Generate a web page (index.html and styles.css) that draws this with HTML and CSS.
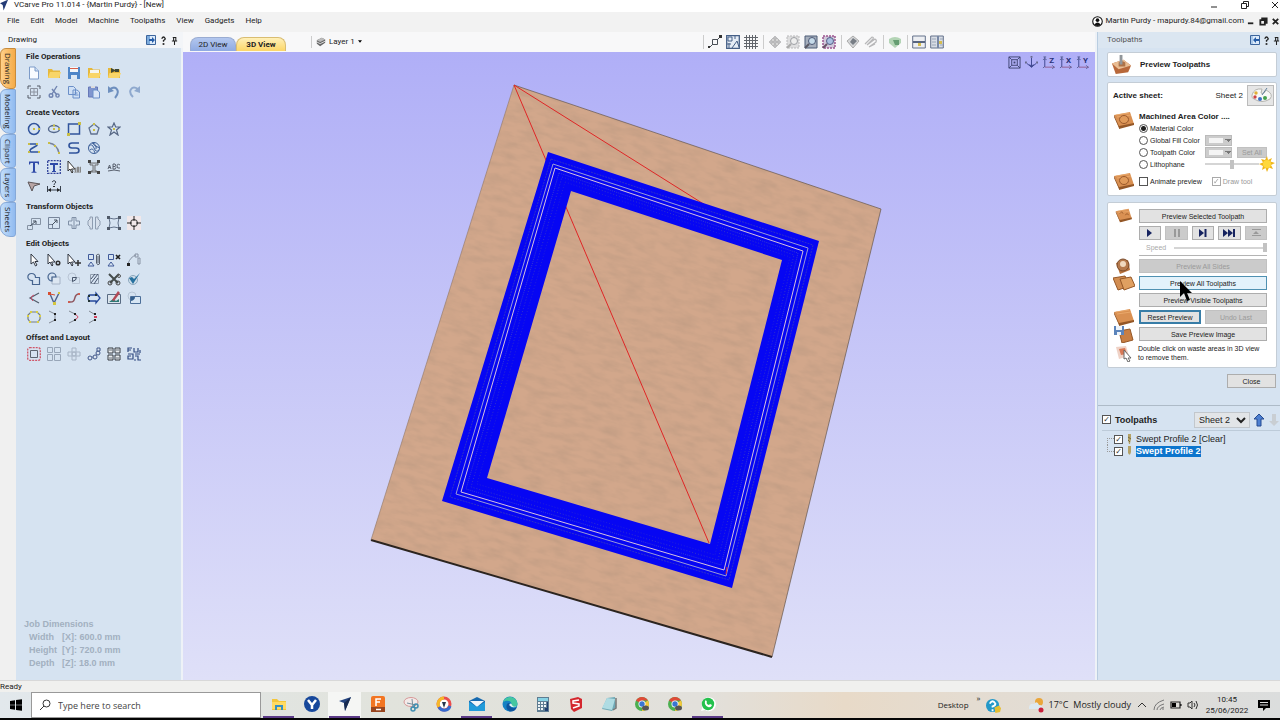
FILE: index.html
```html
<!DOCTYPE html>
<html lang="en">
<head>
<meta charset="utf-8">
<title>VCarve Pro</title>
<link rel="stylesheet" href="styles.css">
</head>
<body>
<svg class="sprite" aria-hidden="true">
  <symbol id="new" viewBox="0 0 14 14"><path d="M2.500 1H8l3.500 3.500V13h-9z" fill="#f8fbff" stroke="#7d9bc8"/><path d="M8 1v4h4" fill="#cfe0f5" stroke="#7d9bc8"/></symbol>
  <symbol id="open" viewBox="0 0 14 14"><path d="M1 12V3h4l1 1.500h7V12z" fill="#e6b83c"/><path d="M1 12l2-6h11l-2 6z" fill="#f8d568"/></symbol>
  <symbol id="save" viewBox="0 0 14 14"><path d="M1 1h12v12H1z" fill="#4f86c8"/><path d="M3 1h8v5H3z" fill="#f4f7fa"/><path d="M3 2h8v1H3z" fill="#d8604a"/><path d="M4 9h6v4H4z" fill="#dfe9f4"/></symbol>
  <symbol id="openvec" viewBox="0 0 14 14"><path d="M1 12V2h4l1 1.500h7V12z" fill="#e6b83c"/><path d="M3 4h9v4H3z" fill="#f6f6ef"/><path d="M1 12l1.500-5H14l-2 5z" fill="#f8d568"/></symbol>
  <symbol id="import" viewBox="0 0 14 14"><path d="M1 12V2h4l1 1.500h7V12z" fill="#e6b83c"/><path d="M1 12l1.500-5H14l-2 5z" fill="#f8d568"/><path d="M4 2l5 2.500L4 7zM8 3h4v3H8z" fill="#3e4634"/></symbol>
  <symbol id="jobsize" viewBox="0 0 14 14"><g fill="none" stroke="#555b66"><path d="M1 4V1h3M10 1h3v3M13 10v3h-3M4 13H1v-3"/><path d="M3.500 3.500h7v7h-7zM7 3v8M3 7h8" stroke="#8c93a0"/></g></symbol>
  <symbol id="cut" viewBox="0 0 14 14"><g fill="none" stroke="#6f83b0" stroke-width="1.400"><path d="M10 1L5 9M5 4l5 6"/><circle cx="4" cy="10.500" r="1.800"/><circle cx="10.500" cy="10.500" r="1.600"/></g></symbol>
  <symbol id="copy" viewBox="0 0 14 14"><path d="M1.500 1.500h5l2 2v6h-7zM6 5h4l2.500 2v6H6z" fill="#cfe0f5" stroke="#6b8fc8"/><path d="M7.500 8h3M7.500 10h4" stroke="#6b8fc8"/></symbol>
  <symbol id="paste" viewBox="0 0 14 14"><path d="M1.500 2h9v10h-9z" fill="#8096cf" stroke="#6778b8"/><path d="M4 1h4v2H4z" fill="#ddd"/><path d="M6 5h4l2.500 2v6H6z" fill="#dae6f7" stroke="#6b8fc8"/></symbol>
  <symbol id="undo" viewBox="0 0 14 14"><path d="M3 4c6-4 11 2 5 9" fill="none" stroke="#6e8fbe" stroke-width="2"/><path d="M1 1v7l6-2z" fill="#6e8fbe"/></symbol>
  <symbol id="redo" viewBox="0 0 14 14"><path d="M11 4C5 0 0 6 6 12" fill="none" stroke="#8fa9ce" stroke-width="2"/><path d="M13 1v7L7 6z" fill="#8fa9ce"/></symbol>
  <symbol id="circle" viewBox="0 0 14 14"><circle cx="7" cy="7" r="5.500" fill="none" stroke="#31549c" stroke-width="1.500"/><path d="M6 6h2v2H6zM11 6h2v2h-2z" fill="#c8bd45"/></symbol>
  <symbol id="ellipse" viewBox="0 0 14 14"><ellipse cx="7" cy="7" rx="5.500" ry="3.500" fill="none" stroke="#53678c" stroke-width="1.400"/><path d="M6 6h2v2H6zM6 2.500h2v2H6zM11 6h2v2h-2z" fill="#c8bd45"/></symbol>
  <symbol id="rect" viewBox="0 0 14 14"><path d="M1.500 2h11v10h-11z" fill="none" stroke="#31549c" stroke-width="1.500"/><path d="M0 11h3v3H0zM11 0h3v3h-3z" fill="#c8bd45"/></symbol>
  <symbol id="poly" viewBox="0 0 14 14"><path d="M7 2l5 4-2 6H4L2 6z" fill="none" stroke="#607190" stroke-width="1.300"/><path d="M6 7h2v2H6zM6 1h2v2H6z" fill="#c8bd45"/></symbol>
  <symbol id="star" viewBox="0 0 14 14"><path d="M7 1l1.700 4H13L9.500 8l1.500 5-4-3-4 3 1.500-5L1 5h4.300z" fill="none" stroke="#566784" stroke-width="1.200"/><path d="M6 6h2v2H6z" fill="#c8bd45"/></symbol>
  <symbol id="polyline" viewBox="0 0 14 14"><path d="M2 3l7 0q2 1 0 2L4 8q-2 2 0 3h8" fill="none" stroke="#31549c" stroke-width="1.600"/><path d="M1 2h2v2H1zM9 2h2v2H9zM1 10h2v2H1zM11 10h2v2h-2z" fill="#c8bd45"/></symbol>
  <symbol id="arc" viewBox="0 0 14 14"><path d="M2 2q8 1 10 10" fill="none" stroke="#78839a" stroke-width="1.400"/><path d="M1 1h2v2H1zM7 4h2v2H7zM11 11h2v2h-2z" fill="#c8bd45"/></symbol>
  <symbol id="curve" viewBox="0 0 14 14"><path d="M12 2H5Q2 2 2 4.500T5 7h4q3 0 3 2.500T9 12H2" fill="none" stroke="#31549c" stroke-width="1.600"/></symbol>
  <symbol id="texture" viewBox="0 0 14 14"><g fill="none" stroke="#3c5f98"><circle cx="7" cy="7" r="5.500"/><path d="M2 5q3-3 5 2t5 2M3 9q3-3 5 3M5 2q5 1 4 6M7 1.500q-2 3 5 5"/></g></symbol>
  <symbol id="text" viewBox="0 0 14 14"><path d="M2 1.500h10v3h-1L10.500 3H8v8.500l1.500.5v.8h-5V12l1.500-.5V3H3.500L3 4.500H2z" fill="#2f4aa8"/></symbol>
  <symbol id="textbox" viewBox="0 0 14 14"><path d="M.7.700h12.600v12.600H.7z" fill="none" stroke="#33449a" stroke-width="1.300" stroke-dasharray="2 1"/><path d="M3 3h8v2H8v6h1v1H5v-1h1V5H3z" fill="#2f4aa8"/></symbol>
  <symbol id="textsel" viewBox="0 0 14 14"><path d="M1 1v10l2-2 2 4 1-1-1.500-3H8z" fill="#fff" stroke="#333"/><path d="M8 8h1v4H8zM10 7h2v5h-2zM13 7h1v5h-1zM7 12.500h7" fill="#888" stroke="#888" stroke-width=".5"/></symbol>
  <symbol id="textcurve" viewBox="0 0 14 14"><path d="M3 3h8v2H8v6h2v1H4v-1h2V5H3z" fill="#c9d3de" stroke="#555" stroke-width=".8"/><path d="M1 0h3v3H1zM10 0h3v3h-3zM1 11h3v3H1zM10 11h3v3h-3z" fill="#444"/></symbol>
  <symbol id="textarc" viewBox="0 0 14 14"><path d="M1 9l1.500-4L4 9M1.500 7.500h2M6 9V4h2q1.500 1 0 2.500H6M8 6.500q2 1 0 2.500H6M13 5q-3-2-3 1t3 2M1 11q6-2 12 0" fill="none" stroke="#59616f"/></symbol>
  <symbol id="trace" viewBox="0 0 14 14"><path d="M1 3l12 2-6 2-2 5z" fill="#b9a6a6" stroke="#5c5558"/></symbol>
  <symbol id="dim" viewBox="0 0 14 14"><path d="M.5 7v6M13.500 7v6M1 11h12M5 3q2-3 4 0-2 2-2 3" fill="none" stroke="#38404d"/><path d="M1 11l3-2v4zM13 11l-3-2v4zM6 7h2v1H6z" fill="#222"/></symbol>
  <symbol id="move" viewBox="0 0 14 14"><path d="M4.500 2.500h9v6h-9zM.5 9.500h5v4h-5z" fill="none" stroke="#8592a3"/><path d="M3 10l6-5M9 5H6M9 5v3" stroke="#46515f"/></symbol>
  <symbol id="size" viewBox="0 0 14 14"><path d="M1.500 1.500h11v11h-11zM1.500 8.500h4v4" fill="none" stroke="#77859a"/><path d="M5 9l5-5M7 4h3v3" fill="none" stroke="#46515f"/></symbol>
  <symbol id="mirror" viewBox="0 0 14 14"><path d="M5 1.500h4V5h3.500v4H9v3.500H5V9H1.500V5H5zM7 1v12" fill="none" stroke="#8090a7"/></symbol>
  <symbol id="align" viewBox="0 0 14 14"><path d="M5.500 1H3v2L1 5v4l2 2v2h2.500zM8.500 1H11v2l2 2v4l-2 2v2H8.500z" fill="#d6dfeb" stroke="#8e9cb0"/></symbol>
  <symbol id="distort" viewBox="0 0 14 14"><path d="M2 2q5 2 10 0-2 5 0 10-5-2-10 0 2-5 0-10z" fill="none" stroke="#64738b"/><path d="M0 0h3v3H0zM11 0h3v3h-3zM0 11h3v3H0zM11 11h3v3h-3z" fill="#4f5968"/></symbol>
  <symbol id="center" viewBox="0 0 14 14"><path d="M0 0h14v14H0z" fill="#f1e8ea"/><circle cx="7" cy="7" r="3.500" fill="none" stroke="#333"/><path d="M7 0v5M7 9v5M0 7h5M9 7h5" stroke="#222"/></symbol>
  <symbol id="cursor" viewBox="0 0 14 14"><path d="M4 1v10l2.500-2 2 4 1.500-1-2-3.500h3z" fill="#fff" stroke="#303641"/></symbol>
  <symbol id="cursornode" viewBox="0 0 14 14"><path d="M1 1v10l2-2 2 4 1-1-1.500-3H8z" fill="#fff" stroke="#303641"/><circle cx="11" cy="10" r="1.800" fill="none" stroke="#333" stroke-width="1.500"/></symbol>
  <symbol id="cursormove" viewBox="0 0 14 14"><path d="M1 1v10l2-2 2 4 1-1-1.500-3H8z" fill="#fff" stroke="#303641"/><path d="M11 7v6M8 10h6" stroke="#333" stroke-width="1.500"/></symbol>
  <symbol id="group" viewBox="0 0 14 14"><path d="M1.500 1.500h5v5h-5zM1 13l3-4 3 4z" fill="none" stroke="#405a99"/><path d="M9.500 2q3-2 3 1v8q-2 2-3-1zM11 3v7" fill="none" stroke="#59616e"/></symbol>
  <symbol id="ungroup" viewBox="0 0 14 14"><path d="M1.500 1.500h5v5h-5zM1 13l3-4 3 4z" fill="none" stroke="#405a99"/><path d="M9 2l4 4M13 2L9 6" stroke="#222" stroke-width="1.700"/></symbol>
  <symbol id="measure" viewBox="0 0 14 14"><path d="M1 11q2-7 8-9M8 1h3v3H8zM11 5h2v6h-2z" fill="none" stroke="#8893a4"/><path d="M0 10h3v3H0z" fill="#222"/></symbol>
  <symbol id="weld" viewBox="0 0 14 14"><path d="M8.500 5.500h4v7h-7v-4C-.5 9-.5 1.500 4.500 1.500q4 0 4 4z" fill="none" stroke="#47658f" stroke-width="1.200"/></symbol>
  <symbol id="subtract" viewBox="0 0 14 14"><path d="M5 5h8v7H5z" fill="#dce6f1" stroke="#a6b4c7"/><path d="M5 9A4 4 0 1 1 9 5H5z" fill="none" stroke="#47658f" stroke-width="1.200"/></symbol>
  <symbol id="intersect" viewBox="0 0 14 14"><circle cx="5" cy="5" r="4" fill="none" stroke="#b9c5d5"/><path d="M5.500 5.500h7v6h-7z" fill="none" stroke="#b9c5d5"/><path d="M5.500 5.500h4q0 3-4 4z" fill="none" stroke="#47556b"/></symbol>
  <symbol id="hatch" viewBox="0 0 14 14"><path d="M3.500 2.500h8v9h-8z" fill="none" stroke="#909dad"/><path d="M4 7l4-5M4 11l7-9M7 12l4-6" stroke="#45526b"/></symbol>
  <symbol id="scissors" viewBox="0 0 14 14"><path d="M2 2l9 9M12 2L3 11" stroke="#444c4c" stroke-width="2"/><circle cx="11" cy="11" r="2" fill="none" stroke="#444"/><circle cx="3" cy="11" r="2" fill="none" stroke="#444"/><circle cx="12" cy="4" r="1.500" fill="none" stroke="#555"/></symbol>
  <symbol id="check" viewBox="0 0 14 14"><circle cx="6" cy="8" r="4.500" fill="#cfdeea" stroke="#8ba7bd"/><path d="M2 6l4 6 7-11-6 6-2-2z" fill="#27719f"/></symbol>
  <symbol id="fillet" viewBox="0 0 14 14"><path d="M12 2L3 7l9 5" fill="none" stroke="#525d6b" stroke-width="1.200"/><path d="M7 4Q2 6 6 10" fill="none" stroke="#cd4a67"/></symbol>
  <symbol id="nodes" viewBox="0 0 14 14"><path d="M3 3l4 9 5-10" fill="none" stroke="#4d628d" stroke-width="1.400"/><path d="M3 3l5 1" stroke="#d74e31"/><path d="M1 1h3v3H1z" fill="#d74e31"/><path d="M6 11h3v3H6zM11 1h2v2h-2z" fill="#d5c63e"/></symbol>
  <symbol id="scurve" viewBox="0 0 14 14"><path d="M2 11c9 1 3-8 10-8" fill="none" stroke="#8e565f" stroke-width="1.500"/><path d="M1 10h2v2H1zM11 2h2v2h-2z" fill="#cc5d51"/></symbol>
  <symbol id="extend" viewBox="0 0 14 14"><path d="M2 4h7V2l4 5-4 5v-2H2q-2-3 0-6z" fill="none" stroke="#25489a" stroke-width="1.300"/><path d="M1 4h2v2H1zM1 9h2v2H1zM8 3h2v2H8z" fill="#233"/></symbol>
  <symbol id="editpic" viewBox="0 0 14 14"><path d="M.5 3.500h13v9H.5z" fill="#dce4ed" stroke="#596b83"/><path d="M2 11l4-3 3 2 3-2v3z" fill="#2f7a75"/><path d="M5 9l6-9 2 2-6 8z" fill="#b24956"/></symbol>
  <symbol id="croppic" viewBox="0 0 14 14"><circle cx="5" cy="5" r="4" fill="none" stroke="#b8c6d6"/><path d="M3.500 5.500h10v7h-10z" fill="#d7e6f4" stroke="#4c6f99"/><path d="M4 6h4q0 3-4 4z" fill="#345f8d"/></symbol>
  <symbol id="close" viewBox="0 0 14 14"><path d="M4 2h6l3 3v4l-2 3H3L1 9V5z" fill="none" stroke="#747e82" stroke-width="1.200"/><path d="M3 1h2v2H3zM9 1h2v2H9zM0 5h2v2H0zM12 5h2v2h-2zM2 11h2v2H2zM10 11h2v2h-2z" fill="#dacf43"/></symbol>
  <symbol id="join" viewBox="0 0 14 14"><path d="M2 1l6 3v6l-6 3" fill="none" stroke="#828a95"/><path d="M7 3h2v2H7zM7 9h2v2H7z" fill="#222"/></symbol>
  <symbol id="joincurve" viewBox="0 0 14 14"><path d="M2 1l6 3M2 13l6-3" stroke="#828a95"/><path d="M7 4q8 3 0 6" fill="none" stroke="#d44661"/><path d="M7 3h2v2H7zM7 9h2v2H7z" fill="#222"/></symbol>
  <symbol id="joinmove" viewBox="0 0 14 14"><path d="M2 1l5 3M2 13l5-3" stroke="#828a95"/><path d="M7 3h2v2H7zM7 9h2v2H7z" fill="#222"/><path d="M7 6h3v2H7z" fill="#d44661"/></symbol>
  <symbol id="offset" viewBox="0 0 14 14"><rect x=".7" y=".7" width="12.600" height="12.600" rx="2" fill="none" stroke="#cf5569" stroke-width="1.300" stroke-dasharray="2 1"/><path d="M3.500 3.500h7v7h-7z" fill="none" stroke="#5e6671"/></symbol>
  <symbol id="array" viewBox="0 0 14 14"><path d="M.5.500h5v5h-5zM7.500.500h6v5h-6zM.5 7.500h5v6h-5zM7.500 7.500h6v6h-6z" fill="none" stroke="#98a6b8"/></symbol>
  <symbol id="circular" viewBox="0 0 14 14"><circle cx="7" cy="7" r="2" fill="none" stroke="#a7b4c5"/><path d="M5 1h4v4H5zM5 9h4v4H5zM1 5h4v4H1zM9 5h4v4H9z" fill="none" stroke="#a7b4c5"/></symbol>
  <symbol id="alongcurve" viewBox="0 0 14 14"><path d="M1 11q8 0 12-9" fill="none" stroke="#7384aa"/><g fill="#dce5f1" stroke="#42588b"><circle cx="3" cy="11" r="2"/><circle cx="8" cy="10" r="2"/><circle cx="11" cy="6" r="2"/><path d="M10 1h3v3h-3z"/></g></symbol>
  <symbol id="plate" viewBox="0 0 14 14"><path d="M1 1h5v5H1zM8 1h5v5H8zM1 8h5v5H1zM8 8h5v5H8z" fill="#e9ecef" stroke="#353b43"/><path d="M2 3h3M9 3h3M2 11h3M9 11h3" stroke="#66707b"/></symbol>
  <symbol id="nest" viewBox="0 0 14 14"><path d="M1 5V1h4M1 3h3M7 1v4h4V1M1 7h5v5H1V9h3M8 7h5M8 9h3v4h3M7 13h2M13 3v3" fill="none" stroke="#314b82" stroke-width="1.200"/></symbol>
  <symbol id="snap" viewBox="0 0 14 14"><path d="M4.500 4.500h5v5h-5zM1 13l4-4M9 5l4-4" fill="none" stroke="#4b5057"/><path d="M0 11h2v2H0zM11 0h3v3h-3z" fill="#333"/></symbol>
  <symbol id="guides" viewBox="0 0 14 14"><path d="M.7.700h12.600v12.600H.7z" fill="#e6edf6" stroke="#466087" stroke-width="1.300"/><path d="M2 2h4v4H2zM3 8v5M1 9h4M6 13l5-7 2 6M9 1v3" fill="none" stroke="#466087"/></symbol>
  <symbol id="grid" viewBox="0 0 14 14"><path d="M2.500 0v14M5.500 0v14M8.500 0v14M11.500 0v14M0 2.500h14M0 5.500h14M0 8.500h14M0 11.500h14" stroke="#62666c"/></symbol>
  <symbol id="pan" viewBox="0 0 14 14"><path d="M7 1l3 3H8v2h2V4l3 3-3 3V8H8v2h2l-3 3-3-3h2V8H4v2L1 7l3-3v2h2V4H4z" fill="#bdbdbf" stroke="#a5a5a7" stroke-width=".5"/></symbol>
  <symbol id="zoomg" viewBox="0 0 14 14"><path d="M1 1h12v12H1z" fill="#dededf" stroke="#b9b9bb" stroke-dasharray="2 1"/><circle cx="8" cy="6" r="3.500" fill="#eee" stroke="#9d9fa4"/><path d="M5 9l-4 4" stroke="#aaa" stroke-width="2"/></symbol>
  <symbol id="zoomb" viewBox="0 0 14 14"><path d="M1 1h12v12H1z" fill="#a6afbd" stroke="#4c5c76"/><circle cx="8" cy="6" r="3.500" fill="#c6dbea" stroke="#4d5875"/><path d="M5 9l-4 4" stroke="#5a5864" stroke-width="2"/></symbol>
  <symbol id="zoomp" viewBox="0 0 14 14"><path d="M1 1h12v12H1z" fill="#d2c8da" stroke="#9c5590" stroke-width="1.500" stroke-dasharray="2 1"/><circle cx="8" cy="6" r="3.500" fill="#a9bfe0" stroke="#545e86"/><path d="M5 9l-4 4" stroke="#675367" stroke-width="2"/></symbol>
  <symbol id="iso" viewBox="0 0 14 14"><path d="M1 6l6-5 6 5-6 7z" fill="#d5d6d8" stroke="#aaa"/><path d="M7 3l4 3-4 4-3-3z" fill="#777d85"/></symbol>
  <symbol id="lines" viewBox="0 0 14 14"><path d="M1 9l7-7q2 0 1 2L3 10l8-6q2 1 1 3l-7 5 6-3" fill="none" stroke="#b7b7b9" stroke-width="1.200"/></symbol>
  <symbol id="material" viewBox="0 0 14 14"><path d="M1 4q6-4 12 0v4l-6 5-6-5z" fill="#b3d4b5"/><path d="M5 5h6v5H7z" fill="#659d72"/></symbol>
  <symbol id="splith" viewBox="0 0 14 14"><path d="M.7 1h12.600v12H.7z" fill="#eceef2" stroke="#65728b"/><path d="M1 6h12v2H1z" fill="#586580"/><path d="M6 8h3v3H6z" fill="#d6bd4e"/></symbol>
  <symbol id="splitv" viewBox="0 0 14 14"><path d="M.7 1h12.600v12H.7z" fill="#d8dde5" stroke="#65728b"/><path d="M7 1h2v12H7z" fill="#7888a5"/><path d="M2 4h4M2 7h4M2 10h4M10 4h3M10 10h3" stroke="#9aa5b7"/><path d="M9 6h3v3H9z" fill="#d6bd4e"/></symbol>
  <symbol id="home" viewBox="0 0 14 14"><path d="M1 1h12v12H1zM4 4h6v6H4zM1 1l3 3M13 1l-3 3M1 13l3-3M13 13l-3-3" fill="none" stroke="#3e4370"/><path d="M6 6h2v2H6z" fill="#3e4370"/></symbol>
  <symbol id="axis" viewBox="0 0 14 14"><path d="M7 2v10M7 12L2 8M7 12l5-4M5 9l2 3 2-3" fill="none" stroke="#39428a"/><path d="M0 6h2v2H0zM12 6h2v2h-2zM6 0h2v2H6z" fill="#67698d"/></symbol>
  <symbol id="axisl" viewBox="0 0 14 14"><path d="M3 1v11" stroke="#39428a"/><path d="M3 12h11" stroke="#925c8e"/><path d="M1.500 1h3M1 13l2-2M1 4l2-1 2 1M11 10l2 2-2 2" fill="none" stroke="#5a6195"/></symbol>
  <symbol id="wood" viewBox="0 0 22 18"><path d="M1 4l16-3 4 12-15 4z" fill="#d99052"/><path d="M1 4l5 11v2L1 6zM6 15l15-3v2L6 18z" fill="#945727"/><path d="M3 4l13-2M4 6l14-2" stroke="#efb174" stroke-width=".7"/></symbol>
  <symbol id="ring" viewBox="0 0 22 18"><use href="#wood"/><ellipse cx="11" cy="8.500" rx="4.500" ry="4" fill="#e09a5a" stroke="#9a592b"/></symbol>
  <symbol id="woodx" viewBox="0 0 22 18"><g transform="translate(2 1) scale(.8)"><use href="#wood" width="22" height="18"/><path d="M6 7q3-4 4 0M13 9q2-4 4 0" fill="none" stroke="#995827"/></g></symbol>
  <symbol id="sides" viewBox="0 0 22 18"><path d="M3 6l12-3 2 10-10 4z" fill="#b8723c"/><circle cx="10" cy="8" r="6" fill="#b5794c" stroke="#7a4c2c"/><circle cx="10" cy="7" r="3" fill="#f1d9bf"/></symbol>
  <symbol id="stack" viewBox="0 0 22 18"><path d="M0 4l12-2 5 10-12 4z" fill="#d28d51" stroke="#945727"/><path d="M7 5l11-2 4 9-11 4z" fill="#dfa061" stroke="#945727"/></symbol>
  <symbol id="saveimg" viewBox="0 0 22 18"><path d="M6 6l11-2 3 11-11 3z" fill="#c87e43" stroke="#945727"/><path d="M1 1h10v9H1z" fill="#5b84bb"/><path d="M3 1h6v4H3zM4 7h4v3H4z" fill="#eef4fa"/></symbol>
  <symbol id="waste" viewBox="0 0 22 18"><path d="M3 3l10-1 3 10-10 3z" fill="#e8bfae" opacity=".7"/><path d="M6 5l6-1 2 6-6 1z" fill="#d77855"/><path d="M11 6v9l2-1 2 4 2-1-2-3h3z" fill="#fff" stroke="#666"/></symbol>
  <symbol id="tool" viewBox="0 0 22 22"><path d="M1 10l12-4 8 6-3 7-13 2z" fill="#b8683a"/><path d="M1 10l12-4 8 6-13 4z" fill="#e9bd93"/><path d="M8 9q3-3 7 0v4H8z" fill="#ad7247"/><path d="M9 1h3v10H9z" fill="#91969a"/></symbol>
  <symbol id="help" viewBox="0 0 8 10"><path d="M2 3Q4-1 6 3 6 4 4 5v1.500" fill="none" stroke="#222" stroke-width="1.500"/><path d="M3 8h2v2H3z" fill="#222"/></symbol>
  <symbol id="pin" viewBox="0 0 8 10"><path d="M2 1.500h4M3 1v4M5.500 1v4M1 5.500h6M4 6v4" stroke="#222" stroke-width="1.200"/></symbol>
  <symbol id="dock" viewBox="0 0 10 10"><path d="M.5.500h9v9h-9z" fill="#dceafa" stroke="#3c659d"/><path d="M1 1h3v8H1z" fill="#7dabdc"/><path d="M3 4h3V2l3 3-3 3V6H3z" fill="#245ca8"/></symbol>
  <symbol id="dockl" viewBox="0 0 10 10"><path d="M.5.500h9v9h-9z" fill="#dceafa" stroke="#3c659d"/><path d="M2 1v8" stroke="#7dabdc"/><path d="M9 4H6V2L3 5l3 3V6h3z" fill="#245ca8"/></symbol>
  <symbol id="min" viewBox="0 0 10 10"><path d="M1 7h6" stroke="currentColor"/></symbol>
  <symbol id="restore" viewBox="0 0 10 10"><path d="M1.500 3.500h5v5h-5zM3.500 3V1.500h5v5H7" fill="none" stroke="currentColor"/></symbol>
  <symbol id="xclose" viewBox="0 0 10 10"><path d="M2 2l6 6M8 2L2 8" stroke="currentColor"/></symbol>
  <symbol id="chrome" viewBox="0 0 16 16"><circle cx="8" cy="8" r="7" fill="#4caf50"/><path d="M8 8L2 4.500A7 7 0 0 1 14 4.500H8z" fill="#df4a38"/><path d="M8 8l6-3.500A7 7 0 0 1 8 15z" fill="#f6c83a"/><circle cx="8" cy="8" r="3.500" fill="#fff"/><circle cx="8" cy="8" r="2.700" fill="#3976d1"/><ellipse cx="11.500" cy="12" rx="3.500" ry="2.500" fill="#555"/></symbol>
</svg>

<div class="app">
  <header class="titlebar">
    <svg class="logo" viewBox="0 0 10 12"><path d="M0 4l9-4-5 12-1-6z" fill="#243c76"/></svg>
    <span>VCarve Pro 11.014 - {Martin Purdy} - [New]</span>
    <div class="winbtns">
      <button aria-label="Minimise"><svg><use href="#min"/></svg></button>
      <button aria-label="Restore"><svg><use href="#restore"/></svg></button>
      <button aria-label="Close window"><svg><use href="#xclose"/></svg></button>
    </div>
  </header>
  <nav class="menubar">
    <button>File</button><button>Edit</button><button>Model</button><button>Machine</button><button>Toolpaths</button><button>View</button><button>Gadgets</button><button>Help</button>
    <div class="account">
      <svg class="user" viewBox="0 0 12 12"><circle cx="6" cy="6" r="5.200" fill="#fff" stroke="#111" stroke-width="1.200"/><circle cx="6" cy="4.500" r="2" fill="#111"/><path d="M2.500 9.500q3.500-5 7 0-3.500 3-7 0z" fill="#111"/></svg>
      <span>Martin Purdy - mapurdy.84@gmail.com</span>
      <svg class="mdi"><use href="#min"/></svg><svg class="mdi"><use href="#restore"/></svg><svg class="mdi"><use href="#xclose"/></svg>
    </div>
  </nav>

  <main class="workspace">
    <aside class="left">
      <div class="panelhead"><span>Drawing</span><svg class="dock"><use href="#dock"/></svg><svg class="mini"><use href="#help"/></svg><svg class="mini"><use href="#pin"/></svg></div>
      <div class="leftbody">
        <div class="rail"><button class="on">Drawing</button><button>Modeling</button><button>Clipart</button><button>Layers</button><button>Sheets</button></div>
        <div class="tools">
          <section><h2>File Operations</h2><div class="icons">
            <svg><use href="#new"/></svg><svg><use href="#open"/></svg><svg><use href="#save"/></svg><svg><use href="#openvec"/></svg><svg><use href="#import"/></svg><i></i>
            <svg><use href="#jobsize"/></svg><svg><use href="#cut"/></svg><svg><use href="#copy"/></svg><svg><use href="#paste"/></svg><svg><use href="#undo"/></svg><svg><use href="#redo"/></svg></div></section>
          <section><h2>Create Vectors</h2><div class="icons">
            <svg><use href="#circle"/></svg><svg><use href="#ellipse"/></svg><svg><use href="#rect"/></svg><svg><use href="#poly"/></svg><svg><use href="#star"/></svg><i></i>
            <svg><use href="#polyline"/></svg><svg><use href="#arc"/></svg><svg><use href="#curve"/></svg><svg><use href="#texture"/></svg><i></i><i></i>
            <svg><use href="#text"/></svg><svg><use href="#textbox"/></svg><svg><use href="#textsel"/></svg><svg><use href="#textcurve"/></svg><svg><use href="#textarc"/></svg><i></i>
            <svg><use href="#trace"/></svg><svg><use href="#dim"/></svg></div></section>
          <section><h2>Transform Objects</h2><div class="icons">
            <svg><use href="#move"/></svg><svg><use href="#size"/></svg><svg><use href="#mirror"/></svg><svg><use href="#align"/></svg><svg><use href="#distort"/></svg><svg><use href="#center"/></svg></div></section>
          <section><h2>Edit Objects</h2><div class="icons">
            <svg><use href="#cursor"/></svg><svg><use href="#cursornode"/></svg><svg><use href="#cursormove"/></svg><svg><use href="#group"/></svg><svg><use href="#ungroup"/></svg><svg><use href="#measure"/></svg>
            <svg><use href="#weld"/></svg><svg><use href="#subtract"/></svg><svg><use href="#intersect"/></svg><svg><use href="#hatch"/></svg><svg><use href="#scissors"/></svg><svg><use href="#check"/></svg>
            <svg><use href="#fillet"/></svg><svg><use href="#nodes"/></svg><svg><use href="#scurve"/></svg><svg><use href="#extend"/></svg><svg><use href="#editpic"/></svg><svg><use href="#croppic"/></svg>
            <svg><use href="#close"/></svg><svg><use href="#join"/></svg><svg><use href="#joincurve"/></svg><svg><use href="#joinmove"/></svg></div></section>
          <section><h2>Offset and Layout</h2><div class="icons">
            <svg><use href="#offset"/></svg><svg><use href="#array"/></svg><svg><use href="#circular"/></svg><svg><use href="#alongcurve"/></svg><svg><use href="#plate"/></svg><svg><use href="#nest"/></svg></div></section>
          <dl class="job"><dt>Job Dimensions</dt><dd><span>Width</span><span>[X]: 600.0 mm</span></dd><dd><span>Height</span><span>[Y]: 720.0 mm</span></dd><dd><span>Depth</span><span>[Z]: 18.0 mm</span></dd></dl>
        </div>
      </div>
    </aside>

    <section class="middle">
      <div class="viewbar">
        <button class="tab">2D View</button><button class="tab current">3D View</button>
        <div class="layer"><svg class="layericon" viewBox="0 0 12 12"><path d="M1 4l6-3 4 2v4L5 11 1 8z" fill="#666"/><path d="M1 4l6-3 4 2-6 3z" fill="#bbb"/><path d="M1 6l4 2 6-3" fill="none" stroke="#eee"/></svg><button>Layer 1</button><svg class="caret" viewBox="0 0 5 3"><path d="M0 0h5L2.500 3z"/></svg></div>
        <div class="viewtools">
          <div><svg><use href="#snap"/></svg><svg><use href="#guides"/></svg><svg><use href="#grid"/></svg></div>
          <div><svg><use href="#pan"/></svg><svg><use href="#zoomg"/></svg><svg><use href="#zoomb"/></svg><svg><use href="#zoomp"/></svg></div>
          <div><svg><use href="#iso"/></svg><svg><use href="#lines"/></svg></div>
          <div><svg><use href="#material"/></svg></div>
          <div><svg><use href="#splith"/></svg><svg><use href="#splitv"/></svg></div>
        </div>
      </div>
      <div class="canvas">
        <svg class="scene" viewBox="183 52 912 628" preserveAspectRatio="xMidYMid meet">
          <defs>
            <filter id="grain" x="0" y="0" width="100%" height="100%"><feTurbulence type="fractalNoise" baseFrequency="0.05 0.16" numOctaves="4" seed="4"/><feColorMatrix values="0 0 0 0 .50  0 0 0 0 .32  0 0 0 0 .22  1.200 0 0 0 -.44"/></filter>
            <clipPath id="board"><path d="M514 85L881 209 772 657 371 540z"/></clipPath>
          </defs>
          <path d="M514 85L881 209 772 657 371 540z" fill="#d2a78b"/>
          <g clip-path="url(#board)"><rect x="200" y="0" width="850" height="800" filter="url(#grain)" transform="rotate(16 626 370)"/></g>
          <path d="M514 85L881 209 772 657" fill="none" stroke="#64564e" stroke-width=".7"/>
          <path d="M371 540l401 117" stroke="#2b241f" stroke-width="2"/>
          <path d="M514 85L371 540" stroke="#8f7768" stroke-width=".6"/>
          <path d="M514 85L709 543M514 85L710 208" stroke="#df2626"/>
          <path fill-rule="evenodd" fill="#0606f3" d="M548 152L819 241 732 588 442 501zM571 191L487 478 710 544 782 260z"/>
          <g fill="none">
            <path d="M551 159L813 245 729 580 450 497z" stroke="#2d30c9" stroke-dasharray="2 1"/>
            <path d="M553 164L808 248 726 576 456 494z" stroke="#9b9bd6"/>
            <path d="M555 168L803 251 724 570 461 492z" stroke="#d8c3db"/>
            <path d="M559 173L798 253 721 565 466 489z" stroke="#3336d5" stroke-dasharray="1 1"/>
            <path d="M562 177L794 255 718 560 471 487z" stroke="#3032cc" stroke-dasharray="1 2"/>
            <path d="M565 182L790 257 715 555 477 484z" stroke="#2021da" stroke-dasharray="1 2"/>
            <path d="M726 574l1-7" stroke="#d42b45"/>
          </g>
        </svg>
        <div class="axes"><svg><use href="#home"/></svg><svg><use href="#axis"/></svg><span><svg><use href="#axisl"/></svg><b>Z</b></span><span><svg><use href="#axisl"/></svg><b>X</b></span><span><svg><use href="#axisl"/></svg><b>Y</b></span></div>
      </div>
    </section>

    <aside class="right">
      <div class="panelhead"><span>Toolpaths</span><svg class="dock"><use href="#dockl"/></svg><svg class="mini"><use href="#help"/></svg><svg class="mini"><use href="#pin"/></svg></div>
      <div class="cards">
        <div class="card title"><svg class="toolicon"><use href="#tool"/></svg><h1>Preview Toolpaths</h1></div>
        <div class="card material">
          <div class="sheet"><b>Active sheet:</b><span>Sheet 2</span><button class="palette" aria-label="Colours"><svg viewBox="0 0 22 16"><path d="M2 8Q4 1 12 2l-1 4q3 2 5-3 8 4 4 9-8 5-16 0Q1 11 2 8z" fill="#f8f8f7" stroke="#b4b4af"/><circle cx="6" cy="6" r="1.700" fill="#dfaf37"/><circle cx="5" cy="10" r="1.700" fill="#cf4444"/><circle cx="10" cy="12" r="2" fill="#3b6fc4"/><circle cx="15" cy="11" r="2" fill="#46a14c"/><path d="M12 8l5-7" stroke="#5e7f9b"/></svg></button></div>
          <div class="area">
            <svg class="w"><use href="#ring"/></svg>
            <div class="opts"><b>Machined Area Color ....</b>
              <div class="opt"><label><input type="radio" name="area" checked>Material Color</label></div>
              <div class="opt"><label><input type="radio" name="area">Global Fill Color</label><button class="swatch" disabled aria-label="Fill colour"></button></div>
              <div class="opt"><label><input type="radio" name="area">Toolpath Color</label><button class="swatch" disabled aria-label="Toolpath colour"></button><button class="setall" disabled>Set All</button></div>
              <div class="opt"><label><input type="radio" name="area">Lithophane</label><input class="light" type="range" value="50" disabled aria-label="Light"><svg class="sun" viewBox="0 0 16 16"><path d="M8 0l1 4 4-2-1.500 3.500L16 7l-4 2 2 4-4-1.500L8 16l-1.500-4L3 14l1-4-4-2 4-1.500L2 3l4 1z" fill="#efb61b"/><circle cx="8" cy="8" r="4" fill="#ffd83b"/></svg></div>
            </div>
          </div>
          <div class="anim"><svg class="w"><use href="#ring"/></svg><label><input type="checkbox">Animate preview</label><label class="off"><input type="checkbox" checked disabled>Draw tool</label></div>
        </div>
        <div class="card actions">
          <svg class="w"><use href="#woodx"/></svg><button>Preview Selected Toolpath</button>
          <div class="transport"><button aria-label="Play"><svg viewBox="0 0 16 10"><path d="M5 1l5 4-5 4z"/></svg></button><button disabled aria-label="Pause"><svg viewBox="0 0 16 10"><path d="M5 1h2v8H5zM9 1h2v8H9z"/></svg></button><button aria-label="Step"><svg viewBox="0 0 16 10"><path d="M4 1l5 4-5 4zM9.500 1h2v8h-2z"/></svg></button><button aria-label="End"><svg viewBox="0 0 16 10"><path d="M2 1l5 4-5 4zM7 1l5 4-5 4zM12 1h2v8h-2z"/></svg></button><button disabled aria-label="Skip"><svg viewBox="0 0 16 10"><path d="M4 1h9v1H4zM8 3l3 3H5zM4 7h9v1H4z"/></svg></button></div>
          <div class="speed"><label for="speed">Speed</label><input id="speed" type="range" value="100" disabled></div>
          <svg class="w"><use href="#sides"/></svg><button disabled>Preview All Sides</button>
          <svg class="w"><use href="#stack"/></svg><div class="hot"><button class="hover">Preview All Toolpaths</button><svg class="pointer" viewBox="0 0 12 20"><path d="M0 0v16l4-4 3 8 3-1-3-7h5z"/></svg></div>
          <button class="second">Preview Visible Toolpaths</button>
          <svg class="w"><use href="#wood"/></svg><div class="pair"><button class="focus">Reset Preview</button><button disabled>Undo Last</button></div>
          <svg class="w"><use href="#saveimg"/></svg><button>Save Preview Image</button>
          <svg class="w"><use href="#waste"/></svg><p>Double click on waste areas in 3D view<br>to remove them.</p>
        </div>
        <button class="closebtn">Close</button>
      </div>
      <div class="list">
        <div class="listhead"><label><input type="checkbox" checked><b>Toolpaths</b></label><select aria-label="Sheet"><option>Sheet 2</option></select><svg class="arrow" viewBox="0 0 12 14"><path d="M6 1l5 5H8v7H4V6H1z" fill="#4c7fd1" stroke="#254b91"/></svg><svg class="arrow" viewBox="0 0 12 14"><path d="M6 13l5-5H8V1H4v7H1z" fill="#c9ced3"/></svg></div>
        <ul>
          <li><label><input type="checkbox" checked><svg class="bit" viewBox="0 0 5 10"><path d="M1 0h3v5L3 10H2L1 6z" fill="#b5a267"/><path d="M1 3l3 2M1 6l2 2" stroke="#786b3d"/></svg><span>Swept Profile 2 [Clear]</span></label></li>
          <li><label><input type="checkbox" checked><svg class="bit" viewBox="0 0 5 10"><path d="M1 0h3v6q-1 5-3 1z" fill="#b5a267"/></svg><span class="sel">Swept Profile 2</span></label></li>
        </ul>
      </div>
    </aside>
  </main>

  <div class="status">Ready</div>
  <footer class="taskbar">
    <button class="start" aria-label="Start"><svg viewBox="0 0 12 12"><path d="M0 2l5-.7v4.400H0zM6 1l6-.8v5.500H6zM0 6.300h5v4.400L0 10zM6 6.300h6v5.500L6 11z"/></svg></button>
    <div class="search"><svg viewBox="0 0 12 12"><circle cx="7.500" cy="4.500" r="3.500" fill="none" stroke="#333"/><path d="M5 7L1 11" stroke="#333"/></svg><input type="text" placeholder="Type here to search" aria-label="Search"></div>
    <div class="apps">
      <button class="run" aria-label="Files"><svg viewBox="0 0 16 16"><path d="M1 3h5l2 2h7v9H1z" fill="#f4c63a"/><path d="M1 6h14v7H1z" fill="#ffdb63"/><path d="M4 14V9h8v5h-2v-3H6v3z" fill="#368fc4"/></svg></button>
      <button aria-label="Vectric"><svg viewBox="0 0 16 16"><circle cx="8" cy="8" r="8" fill="#17489b"/><path d="M4 4l4 5 4-5M8 8v5" fill="none" stroke="#fff" stroke-width="2.500"/></svg></button>
      <button class="run active" aria-label="VCarve"><svg viewBox="0 0 16 16"><path d="M2 5l12-4-6 14-1-8z" fill="#24447f"/><path d="M7 7l7-6-6 14z" fill="#16294f"/></svg></button>
      <button aria-label="Fusion"><svg viewBox="0 0 16 16"><rect x="1" width="14" height="16" rx="2" fill="#f27522"/><path d="M1 11h14v5H1z" fill="#98451e"/><path d="M6 10V3h5M6 6h4M6 13.500h5" fill="none" stroke="#fff" stroke-width="1.500"/></svg></button>
      <button aria-label="Snip"><svg viewBox="0 0 16 16"><ellipse cx="8" cy="6" rx="7" ry="4.500" fill="#f3eae9" stroke="#d79897"/><path d="M4 7l9 2M9 3l1 9" stroke="#78909c"/><g fill="none" stroke="#418eb1" stroke-width="1.500"><circle cx="10" cy="13" r="2"/><circle cx="13" cy="10" r="2"/></g></svg></button>
      <button aria-label="Browser"><svg viewBox="0 0 16 16"><circle cx="8" cy="8" r="6" fill="#fff" stroke="#e94e4e" stroke-width="3"/><path d="M8 2a6 6 0 0 0-5 9" fill="none" stroke="#f6b928" stroke-width="3"/><path d="M3 11a6 6 0 0 0 11-1" fill="none" stroke="#366bd0" stroke-width="3"/><path d="M6 6h4l-2 6z" fill="#29364c"/></svg></button>
      <button class="run" aria-label="Mail"><svg viewBox="0 0 16 16"><path d="M0 5l8-4 8 4v9H0z" fill="#176aaf"/><path d="M1 5h14l-7 6z" fill="#f1f6fa"/><path d="M0 6l8 5 8-5v9H0z" fill="#219bda"/></svg></button>
      <button aria-label="Edge"><svg viewBox="0 0 16 16"><circle cx="8" cy="8" r="7.500" fill="#1682c4"/><path d="M1 6C4-2 15 0 15.500 8c0 3-5 4-7 2 3-4-2-7-7.500-4z" fill="#45c7a0"/><path d="M8 10q3 4 7 1-2 5-7 4.500Q3 13 5 8q3-3 3 2z" fill="#0e559d"/><path d="M7 9q2-3 3 0 1 3 5 1-4 3-8-1z" fill="#e5f1f3"/></svg></button>
      <button aria-label="Calculator"><svg viewBox="0 0 16 16"><path d="M2 1h12v15H2z" fill="#5f7d92"/><path d="M3 2h10v3H3z" fill="#88d3e5"/><path d="M3 6h2v2H3zM6 6h2v2H6zM9 6h2v2H9zM3 9h2v2H3zM6 9h2v2H6zM9 9h2v2H9zM3 12h2v2H3zM6 12h2v2H6z" fill="#eef3f6"/><path d="M12 6h1v9h-3v-3h2z" fill="#203e70"/></svg></button>
      <button aria-label="SketchUp"><svg viewBox="0 0 16 16"><path d="M2 3l8-2 4 2v9l-8 4-3-3z" fill="#d4272e"/><path d="M11 4L5 5v2l6 1v2l-6 2" fill="none" stroke="#fff" stroke-width="1.500"/></svg></button>
      <button aria-label="Notes"><svg viewBox="0 0 16 16"><path d="M6 2l8-1 1 10-4 4-10-2z" fill="#6fa9b6"/><path d="M6 2l8 1-3 11-10-2z" fill="#afdce3"/><path d="M15 2v10l-3 2" stroke="#777" stroke-width="1.500" fill="none"/></svg></button>
      <button aria-label="Chrome 1"><svg><use href="#chrome"/></svg></button>
      <button aria-label="Chrome 2"><svg><use href="#chrome"/></svg></button>
      <button class="run" aria-label="WhatsApp"><svg viewBox="0 0 16 16"><path d="M1 15l1.500-4a7 7 0 1 1 2.500 3z" fill="#fff"/><circle cx="8" cy="8" r="6.200" fill="#24c14d"/><path d="M5 5q1-2 2 1l-.5 1q1 2 2.500 2l1-1 2 1q-1 3-4 2-4-2-3-6z" fill="#fff"/></svg></button>
    </div>
    <div class="tray">
      <span class="desktop">Desktop</span><span class="more">»</span>
      <svg class="trayicon" viewBox="0 0 16 16"><circle cx="7" cy="8" r="7" fill="#2398c8"/><path d="M4 6q3-5 6 0 0 2-3 3v1M7 12v2" fill="none" stroke="#fff" stroke-width="2"/><path d="M9 10l5-2 2 3-1 4-5 1z" fill="#e5be31"/></svg>
      <svg class="weather" viewBox="0 0 16 16"><circle cx="11" cy="5" r="4" fill="#eaa63a"/><path d="M1 10Q2 6 6 7q3-4 5 1 4 0 3 4H1z" fill="#dce9f1"/><circle cx="13" cy="13" r="2.500" fill="#c91f39"/></svg>
      <span class="temp">17°C</span><span class="temp">Mostly cloudy</span>
      <svg class="sm" viewBox="0 0 12 12"><path d="M2 8l4-4 4 4" fill="none" stroke="#333"/></svg>
      <svg class="sm" viewBox="0 0 12 12"><path d="M1 11Q1 4 11 1M4 11q0-4 7-6M7 11q0-2 4-3M10 11V9" fill="none" stroke="#777"/></svg>
      <svg class="sm" viewBox="0 0 12 12"><path d="M1 3h9v6H1zM11 5v2" fill="none" stroke="#222" stroke-width="1.200"/><path d="M2 4h4v4H2z"/></svg>
      <svg class="sm" viewBox="0 0 12 12"><path d="M1 4h2l2-2v8L3 8H1zM7 4q2 2 0 4M9 2q3 4 0 8" fill="none" stroke="#333"/></svg>
      <div class="clock"><span>10:45</span><span>25/06/2022</span></div>
      <svg class="note" viewBox="0 0 12 12"><path d="M0 1h12v8H8l-3 3V9H0z"/><path d="M2 3.500h8M2 6h8" stroke="#ddd"/></svg>
    </div>
  </footer>
</div>
</body>
</html>
```
FILE: styles.css
```css
* { box-sizing: border-box; }
body { margin: 0; font: 8px/12px Roboto, "Noto Sans", sans-serif; color: #222; background: #f0f0f0; }
button { font: inherit; color: inherit; border: 0; padding: 0; background: none; }
input, select { font: inherit; margin: 0; }
h1, h2, p, ul, dl, dd { margin: 0; padding: 0; }
.sprite { position: absolute; width: 0; height: 0; }
.app { display: flex; flex-direction: column; height: 100vh; overflow: hidden; }

.titlebar { display: flex; align-items: center; height: 12px; padding-bottom: 3px; background: #fff; flex: none; line-height: 8px; }
.logo { width: 9px; height: 12px; margin-right: 5px; }
.winbtns { display: flex; margin-left: auto; gap: 20px; }
.winbtns svg { width: 10px; height: 10px; display: block; }
.menubar { display: flex; align-items: center; height: 20px; padding: 0 0 2px 7px; gap: 11px; background: #f2f2f2; flex: none; }
.account { display: flex; align-items: center; margin-left: auto; gap: 3px; }
.user { width: 11px; height: 11px; }
.mdi { width: 9px; height: 9px; stroke-width: 2; }

.workspace { display: flex; flex: 1; min-height: 0; background: #eef2f7; }
.left { display: flex; flex-direction: column; width: 183px; }
.panelhead { display: flex; align-items: center; height: 16px; padding: 0 5px 0 8px; gap: 4px; flex: none; background: #f3f5f8; }
.panelhead span { margin-right: auto; }
.dock { width: 10px; height: 10px; }
.mini { width: 7px; height: 9px; }
.leftbody { display: flex; flex: 1; min-height: 0; }
.rail { display: flex; flex-direction: column; width: 16px; background: #f0f0f0; }
.rail button { writing-mode: vertical-rl; width: 16px; padding: 4px 0; border: 1px solid #86a9d8; border-radius: 6px 1px 3px 10px; background: linear-gradient(90deg, #c2ddfa, #90baf0); font: 8px/14px "Open Sans", sans-serif; }
.rail .on { background: linear-gradient(90deg, #ffd08a, #f5ab48); border-color: #c78b3c; }
.tools { display: flex; flex-direction: column; flex: 1; gap: 6px; padding: 3px 0 10px 8px; background: #d6e3f1; margin-right: 2px; }
h2 { padding-left: 2px; font-size: 8px; line-height: 12px; }
.icons { display: grid; grid-template-columns: repeat(6, 20px); grid-auto-rows: 19px; place-items: center; }
.icons svg { width: 14px; height: 14px; }
.job { margin-top: auto; font: bold 9px/13px "Liberation Sans", sans-serif; color: #a2b0c0; }
.job dd { display: flex; padding-left: 5px; gap: 4px; }
.job dd span:first-child { min-width: 29px; }

.middle { display: flex; flex-direction: column; flex: 1; min-width: 0; }
.viewbar { display: flex; align-items: flex-end; height: 20px; padding: 0 151px 1px 7px; background: #f8f8f9; flex: none; }
.tab { width: 46px; height: 14px; background: linear-gradient(#b3c7ef, #8faae2); border: 1px solid #9aacd2; border-bottom: 0; border-radius: 8px 8px 0 0; }
.current { width: 50px; background: linear-gradient(#fff0b9, #fcd667); border-color: #d9bd72; font-weight: bold; }
.layer { display: flex; align-items: center; align-self: center; gap: 3px; margin-left: 25px; padding-left: 4px; border-left: 1px solid #ccc; }
.layericon { width: 10px; height: 10px; }
.caret { width: 4px; height: 3px; }
.viewtools { display: flex; align-self: center; margin-left: auto; gap: 5px; }
.viewtools div { display: flex; gap: 4px; padding-left: 4px; border-left: 1px solid #ccc; }
.viewtools svg { width: 14px; height: 14px; }
.canvas { position: relative; flex: 1; min-height: 0; background: linear-gradient(#b0aff7, #dfe0f8); }
.scene { display: block; width: 100%; height: 100%; }
.axes { position: absolute; top: 4px; right: 6px; display: flex; gap: 4px; }
.axes svg { width: 13px; height: 13px; display: block; }
.axes span { position: relative; }
.axes b { position: absolute; right: 1px; top: -1px; color: #293078; }

.right { display: flex; flex-direction: column; width: 183px; margin-left: 2px; background: #d6e3f1; border-left: 1px solid #b9cde1; }
.right .panelhead { background: #dbe6f1; padding: 0 0 0 9px; color: #555; gap: 3px; }
.cards { display: flex; flex-direction: column; gap: 5px; padding: 4px 3px 17px 9px; font-family: "Liberation Sans", sans-serif; border-bottom: 1px solid #aebbc8; font-size: 7px; line-height: 9px; }
.card { background: #fff; border: 1px solid #c4cdd6; border-radius: 2px; }
.title { display: flex; align-items: center; height: 25px; padding-left: 3px; gap: 8px; }
.toolicon { width: 21px; height: 21px; }
h1 { font-size: 8px; }
.material { padding: 2px 2px 5px 5px; }
.sheet { display: flex; align-items: center; gap: 4px; }
.sheet b, .sheet span { font-size: 8px; }
.sheet b { margin-right: auto; }
.palette { width: 27px; height: 21px; background: #e6e6e6; border: 1px solid #bbb; }
.palette svg { width: 22px; height: 16px; }
.w { width: 22px; height: 18px; flex: none; }
.area { display: flex; gap: 4px; padding-top: 5px; }
.opts { flex: 1; min-width: 0; }
.opts b { display: block; font-size: 8px; line-height: 11px; }
.opt { display: flex; align-items: center; height: 12px; padding-right: 7px; }
.opt label, .anim label { display: flex; align-items: center; gap: 2px; }
.opt label { width: 66px; flex: none; white-space: nowrap; }
input[type=radio], input[type=checkbox] { appearance: none; width: 9px; height: 9px; border: 1px solid #555; background: #fff; flex: none; }
input[type=radio] { border-radius: 50%; }
input[type=radio]:checked { background: radial-gradient(circle, #222 2px, #fff 3px); }
input[type=checkbox]:checked::before { content: "✓"; display: block; font: 8px/7px "DejaVu Sans", sans-serif; text-align: center; color: #333; }
.swatch { width: 27px; height: 11px; flex: none; background: linear-gradient(#f4f4f4, #f4f4f4) 3px 2px / 14px 5px no-repeat, conic-gradient(from 315deg at 50% 100%, #777 90deg, transparent 0) 19px 3px / 6px 3px no-repeat, #ccc; border: 1px solid #bbb; }
.setall { margin-left: auto; width: 30px; height: 11px; }
.light { flex: 1; }
.sun { width: 16px; height: 16px; margin-right: -8px; flex: none; }
.anim { display: flex; align-items: center; gap: 4px; margin-top: 2px; white-space: nowrap; }
.anim .off { margin-left: 6px; color: #999; }
.off input { opacity: .5; }
input[type=range] { appearance: none; width: 20px; height: 9px; background: linear-gradient(#d5d5d5, #d5d5d5) 0 50% / 100% 2px no-repeat; }
input[type=range]::-webkit-slider-thumb { appearance: none; width: 4px; height: 9px; background: #c2c2c2; }
.actions { display: grid; grid-template-columns: 22px minmax(0, 1fr); column-gap: 4px; row-gap: 3px; padding: 6px 9px 5px 5px; margin-top: 1px; align-items: center; }
.actions .w { margin: -2px 0; }
.actions button, .closebtn { height: 14px; background: #e2e2e2; border: 1px solid #adadad; width: 100%; line-height: 9px; }
.actions button:disabled, .setall { background: #cbcbcb; border: 1px solid #c1c1c1; color: #9a9a9a; }
.transport, .speed, .second { grid-column: 2; }
.transport { display: grid; grid-template-columns: repeat(5, 1fr); gap: 4px; }
.transport svg { display: block; width: 16px; height: 10px; margin: auto; fill: #16235f; }
.transport button:disabled svg { fill: #999; }
.speed { display: flex; align-items: center; gap: 8px; padding: 0 0 3px 7px; border-bottom: 1px solid #b4b4b4; color: #aaa; }
.speed input { flex: 1; }
.hot { position: relative; display: flex; }
.pointer { position: absolute; left: 41px; top: 5px; width: 12px; height: 20px; z-index: 1; }
.actions .hover { background: #e3f2fb; border-color: #4f91b2; }
.pair { display: grid; grid-template-columns: 1fr 1fr; gap: 4px; }
.actions .focus { border: 2px solid #387da7; }
.actions p { margin-left: -1px; white-space: nowrap; }
.cards .closebtn { align-self: flex-end; width: 49px; margin: 1px 1px 0 0; }
.list { font: 9px/12px "Liberation Sans", sans-serif; padding-left: 4px; }
.listhead { display: flex; align-items: center; height: 25px; padding-top: 3px; gap: 3px; border-bottom: 1px solid #bdcbd9; }
.listhead label { display: flex; gap: 4px; align-items: center; margin-right: auto; }
.listhead select { width: 56px; height: 16px; background: #e2e5e8; border: 1px solid #c2c7cc; color: #222; }
.arrow { width: 12px; height: 14px; }
ul { list-style: none; padding: 2px 0 0 5px; }
li label { display: flex; align-items: center; gap: 4px; }
li::before { content: ""; width: 6px; height: 6px; border-left: 1px dotted #999; border-bottom: 1px dotted #999; }
li:last-child::before { border-top: 0; }
li:first-child::before { align-self: flex-end; border-bottom: 0; border-top: 1px dotted #999; }
li { display: flex; height: 12px; }
.bit { width: 5px; height: 10px; }
.sel { background: #0d75cd; color: #fff; line-height: 11px; font-weight: bold; }

.status { height: 12px; flex: none; background: #f0f0ee; border-top: 1px solid #d8d8d8; }
.taskbar { display: flex; align-items: center; height: 28px; flex: none; border-bottom: 2px solid #050505; background: linear-gradient(90deg, #e2e8ec 0, #e1e3dc 30%, #e2e0db 55%, #e8dac8 66%, #e4dcd1 76%, #dbdddd); }
.start { width: 31px; }
.start svg { width: 12px; height: 12px; display: block; margin: auto; }
.search { display: flex; align-items: center; width: 230px; height: 26px; padding-left: 7px; gap: 7px; background: #fff; border: 1px solid #999; }
.search svg { width: 12px; height: 12px; }
.search input { flex: 1; min-width: 0; border: 0; padding: 0; font: 9px "Open Sans", sans-serif; }
.search input::placeholder { color: #444; opacity: 1; }
.apps { display: flex; align-self: stretch; padding-left: 1px; }
.apps button { width: 33px; border-bottom: 2px solid transparent; }
.apps svg { display: block; width: 16px; height: 16px; margin: auto; }
.apps .run { border-image: linear-gradient(90deg, transparent 10%, #5c3b88 10% 90%, transparent 90%) 2; }
.apps .active { background: #f5f6f4; }
.tray { display: flex; align-items: center; gap: 5px; margin-left: auto; padding-right: 10px; white-space: nowrap; font-family: "Open Sans", sans-serif; }
.more { align-self: flex-start; margin-left: 3px; line-height: 8px; }
.trayicon { width: 15px; height: 15px; }
.weather { width: 16px; height: 16px; margin-left: 22px; }
.temp { font-size: 9px; }
.sm { width: 12px; height: 12px; }
.clock { display: grid; width: 46px; justify-items: center; font: 8px/11px Roboto, sans-serif; }
.note { width: 12px; height: 12px; margin-left: 3px; }
```
